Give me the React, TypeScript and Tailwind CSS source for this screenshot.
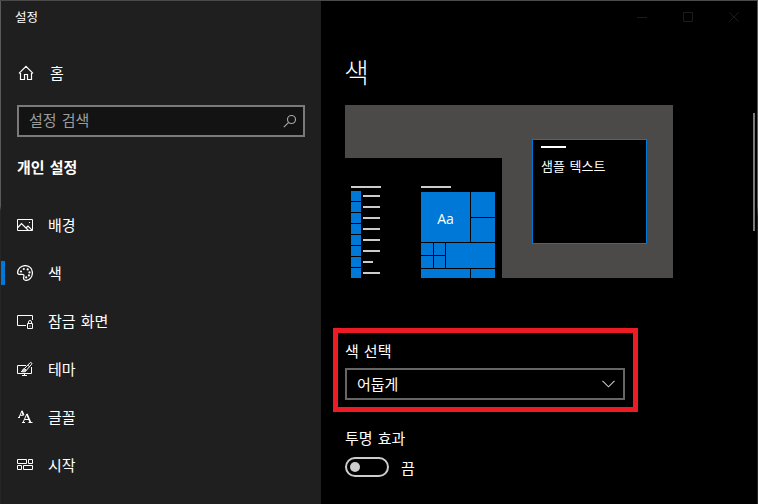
import type { ReactNode } from "react";

function Icon({ children, className = "" }: { children: ReactNode; className?: string }) {
  return (
    <svg width="16" height="16" viewBox="0 0 16 16" fill="none" stroke="#fff" strokeWidth="1" className={`shrink-0 ${className}`}>
      {children}
    </svg>
  );
}

const HomeIcon = () => (
  <Icon>
    <path d="M1 8.300 8 1.300l7 7M2.500 6.800v7.700h4V9.500h3v5h4V6.800" strokeWidth="1.200" />
  </Icon>
);

const PictureIcon = () => (
  <Icon>
    <path d="M.5 2.500h15v11H.500z" />
    <path d="M.8 10.500 4.500 6.500l7 7M9 11l2-2 4.300 4.300" strokeWidth="1.200" />
    <path d="M12 5h1v1h-1z" fill="#fff" stroke="none" />
  </Icon>
);

const PaletteIcon = () => (
  <Icon>
    <path d="M.6 8C.6 3.500 4 .6 8.300.6c4.200 0 7.100 3 7.100 7.100 0 4.300-2.800 7.700-6.200 7.700-2 0-2.800-1-2.600-2.700.2-1.400.7-2.100.1-2.900-.7-.9-1.700-.5-3.200-.4C1.700 9.600.6 9.100.6 8Z" strokeWidth="1.250" />
    <g fill="#fff" stroke="none">
      <circle cx="4" cy="6.500" r="1.100" />
      <circle cx="6.800" cy="4" r="1.100" />
      <circle cx="10.700" cy="4.400" r="1.100" />
      <circle cx="12.500" cy="7.400" r="1.100" />
      <circle cx="11.900" cy="10.400" r="1.100" />
      <circle cx="9.200" cy="12.400" r="1.100" />
    </g>
  </Icon>
);

const LockScreenIcon = () => (
  <Icon>
    <path d="M9 12.500H.5v-10h15V7M10.500 10.500h5v5h-5zM11.500 10.500V9a1.500 1.500 0 0 1 3 0v1.500" />
    <path d="M12.500 12.500h1v1h-1z" fill="#fff" stroke="none" />
  </Icon>
);

const ThemeIcon = () => (
  <Icon>
    <path d="M9 4.500H.5v8h14V6M7.500 12.500v2M5 14.500h5" />
    <path d="m7.500 7.500 5.400-5.600c1-1 2.500.1 1.700 1.300L9.500 9.200" />
    <path d="M7.300 7.500 9.300 9.200c-.2 1.500-2 2-5 1.400 1.700-.7 1.300-2.800 3-3.100Z" fill="#ccc" />
    <path d="m11 4.300 1.700 1.500" />
  </Icon>
);

const FontsIcon = () => (
  <Icon>
    <path d="M1 8.500h2M2 8.500 4.900 2 6.500 6.200M3.200 6.300h3M5 13.500h3M6 13.500l3.800-8.500M7.700 10.500h5M11.500 13.500h4" />
    <path d="m4.800 1.700 1.900 4.600M9.800 4.800l3.700 8.700" strokeWidth="1.700" />
  </Icon>
);

const StartIcon = () => (
  <Icon>
    <path d="M.5 2.500h9v4h-9zM11.500 2.500h4v4h-4zM.5 8.500h4v4h-4zM6.500 8.500h9v4h-9z" />
  </Icon>
);

const navItems = [
  { label: "배경", icon: <PictureIcon /> },
  { label: "색", icon: <PaletteIcon />, active: true },
  { label: "잠금 화면", icon: <LockScreenIcon /> },
  { label: "테마", icon: <ThemeIcon /> },
  { label: "글꼴", icon: <FontsIcon /> },
  { label: "시작", icon: <StartIcon /> },
];

function Sidebar() {
  return (
    <aside className="flex w-80 shrink-0 flex-col bg-[#1f1f1f]">
      <div className="mt-[7px] pl-[14px] text-[12.5px] leading-[18px]">설정</div>
      <div className="mt-[34px] flex h-[26px] items-center gap-[16px] pl-[17px]">
        <HomeIcon />
        <span>홈</span>
      </div>
      <div className="mt-[19px] ml-4 flex h-8 w-[288px] items-center justify-between border-2 border-[#7a7a7a] bg-[#131313] pr-[6px] pl-[10px] text-[#9c9c9c]">
        <span className="pb-[2px]">설정 검색</span>
        <svg width="14" height="14" viewBox="0 0 14 14" fill="none" stroke="#a8a8a8" strokeWidth="1.150">
          <circle cx="8.500" cy="5.500" r="4" />
          <path d="M5.700 8.300.8 13.200" />
        </svg>
      </div>
      <div className="mt-[19px] pl-4 leading-[22px] font-bold">개인 설정</div>
      <nav className="mt-[23px] flex flex-col">
        {navItems.map((item) => (
          <div key={item.label} className="flex h-12 items-center">
            <span className={`h-6 w-1 ${item.active ? "bg-[#0078d7]" : ""}`} />
            <span className="ml-3">{item.icon}</span>
            <span className="ml-[15px]">{item.label}</span>
          </div>
        ))}
      </nav>
    </aside>
  );
}

const listLines = [17, 17, 17, 17, 17, 17, 10, 17];

function Preview() {
  return (
    <div className="flex h-[173px] w-[328px] items-end bg-[#4c4a48]">
      <div className="flex h-[120px] w-[157px] bg-black pt-[28px] pl-[6px]">
        <div className="w-[70px]">
          <div className="h-[2px] w-[30px] bg-[#ccc]" />
          <div className="mt-[3px] flex flex-col gap-px">
            {listLines.map((w, i) => (
              <div key={i} className="flex h-[10px] items-center gap-[2px]">
                <span className="size-[10px] bg-[#0078d7]" />
                <span className="h-[2px] bg-[#ccc]" style={{ width: w }} />
              </div>
            ))}
          </div>
        </div>
        <div className="w-[74px]">
          <div className="h-[2px] w-[30px] bg-[#ccc]" />
          <div className="mt-[4px] grid grid-cols-[12px_11px_24px_24px] grid-rows-[25px_24px_12px_12px_9px] gap-px *:bg-[#0078d7]">
            <div className="col-span-3 row-span-2 flex items-center justify-center pt-[4px] font-['Open_Sans',sans-serif] text-[14px]">Aa</div>
            <div />
            <div />
            <div />
            <div />
            <div className="col-span-2 row-span-2" />
            <div />
            <div />
            <div className="col-span-3" />
            <div />
          </div>
        </div>
      </div>
      <div className="mb-[34px] ml-[30px] h-[105px] w-[115px] border border-[#0078d7] bg-black pt-[6px] pl-[8px]">
        <div className="h-[2px] w-[25px] bg-white" />
        <div className="mt-[9px] text-[13px] leading-[18px]">샘플 텍스트</div>
      </div>
    </div>
  );
}

function WindowControls() {
  return (
    <div className="flex h-8 items-center justify-end gap-[36px] pr-[18px]">
      {["M0 5.500h10", "M.5.5h9v9h-9z", "m.3.3 9.400 9.400m0-9.400L.3 9.700"].map((d) => (
        <svg key={d} width="10" height="10" viewBox="0 0 10 10" fill="none" stroke="#1c1c1c">
          <path d={d} />
        </svg>
      ))}
    </div>
  );
}

function ColorSettings() {
  return (
    <main className="flex flex-1 flex-col bg-black">
      <WindowControls />
      <div className="flex flex-1">
        <div className="flex flex-1 flex-col pl-3">
          <h1 className="mt-[19px] ml-[11px] h-[40px] text-[27px] leading-[40px] font-light">색</h1>
          <div className="mt-[13px] ml-[12px]">
            <Preview />
          </div>
          <section className="mt-[50px] h-[84px] w-[305px] border-[5px] border-[#ed1c24] pt-[7px] pl-[7px]">
            <div className="leading-[22px]">색 선택</div>
            <div className="mt-[6px] flex h-8 w-[280px] items-center justify-between border-2 border-[#666] pr-[8px] pl-[10px]">
              <span>어둡게</span>
              <svg width="13" height="8" viewBox="0 0 13 8" fill="none" stroke="#c4c4c4" strokeWidth="1.150">
                <path d="m.5.8 6 6 6-6" />
              </svg>
            </div>
          </section>
          <div className="mt-[15px] ml-[12px] leading-[22px]">투명 효과</div>
          <div className="mt-[8px] ml-[12px] flex h-5 items-center gap-[12px]">
            <div className="flex h-5 w-11 items-center rounded-full border-2 border-[#ccc] pl-[3px]">
              <span className="size-[10px] rounded-full bg-[#ccc]" />
            </div>
            <span className="mt-[2px] leading-5">끔</span>
          </div>
        </div>
        <div className="mt-[80px] mr-[2px] h-[118px] w-[2px] bg-[#7a7a7a]" />
      </div>
    </main>
  );
}

export default function App() {
  return (
    <div className="flex h-[504px] w-[758px] flex-col overflow-hidden bg-black font-['Noto_Sans_CJK_KR',sans-serif] text-[15px] leading-[20px] text-white [word-spacing:1.7px]">
      <div className="h-px shrink-0 bg-[#4a4a4a]" />
      <div className="flex flex-1">
        <div className="w-px bg-linear-to-b from-[#5a5a5a] from-[205px] to-[#262626] to-[210px]" />
        <Sidebar />
        <ColorSettings />
        <div className="w-px bg-linear-to-b from-[#5a5a5a] from-[205px] to-[#262626] to-[215px]" />
      </div>
    </div>
  );
}
